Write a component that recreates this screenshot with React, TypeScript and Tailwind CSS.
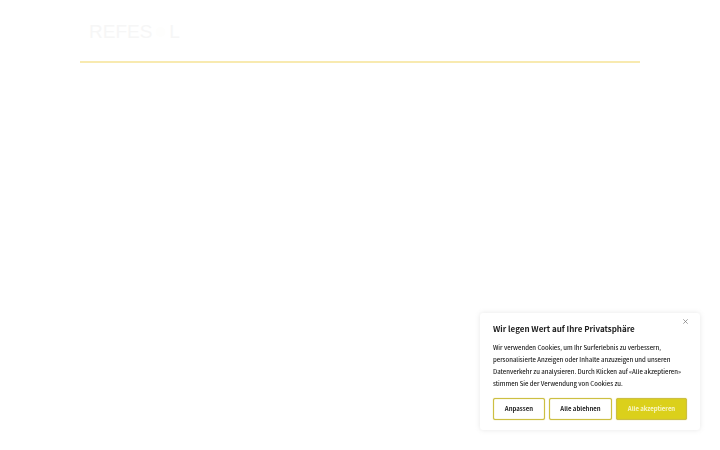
import { useState } from "react";

const buttonBase =
  "h-[22px] cursor-pointer rounded-[2px] border border-[#cdbf42] text-center whitespace-nowrap shadow-[0_0_1px_#cdbf42,inset_0_0_1px_#cdbf42]";

function Logo() {
  return (
    <a
      href="#"
      aria-label="Refesol"
      className="flex w-fit items-center font-['Liberation_Sans',sans-serif] text-[19px] leading-[22px] text-[#f6f6f6]"
    >
      <span>REFES</span>
      <svg viewBox="0 0 16 16" className="h-4 w-[17px]" aria-hidden="true">
        <circle cx="8" cy="8" r="5" fill="#fefefd" />
      </svg>
      <span>L</span>
    </a>
  );
}

function CookieBanner({ onClose }: { onClose: () => void }) {
  return (
    <section
      role="dialog"
      aria-labelledby="cookie-title"
      className="fixed right-5 bottom-5 w-[220px] rounded-[3px] bg-white px-[13px] pt-[9px] pb-[10px] shadow-[0_0_5px_#acabab4d]"
    >
      <button
        type="button"
        aria-label="Schliessen"
        onClick={onClose}
        className="absolute top-[6px] right-[12px] flex cursor-pointer"
      >
        <svg viewBox="0 0 5 5" className="h-[5px] w-[5px]" stroke="#777" strokeWidth="0.7">
          <path d="M0.3 0.3 4.7 4.7M4.7 0.3 0.3 4.7" />
        </svg>
      </button>
      <h2 id="cookie-title" className="text-[8px] leading-[14px] font-bold text-[#212121]">
        Wir legen Wert auf Ihre Privatsphäre
      </h2>
      <p className="mt-[6px] text-[6px] leading-[12px] font-medium text-[#212121]">
        Wir verwenden Cookies, um Ihr Surferlebnis zu verbessern,
        <br />
        personalisierte Anzeigen oder Inhalte anzuzeigen und unseren
        <br />
        Datenverkehr zu analysieren. Durch Klicken auf «Alle akzeptieren»
        <br />
        stimmen Sie der Verwendung von Cookies zu.
      </p>
      <div className="mt-2 grid grid-cols-[52fr_63fr_71fr] gap-1 text-[6px] leading-[12px] font-bold">
        <button type="button" onClick={onClose} className={`${buttonBase} bg-white text-[#212121]`}>
          Anpassen
        </button>
        <button type="button" onClick={onClose} className={`${buttonBase} bg-white text-[#212121]`}>
          Alle ablehnen
        </button>
        <button type="button" onClick={onClose} className={`${buttonBase} bg-[#dbd01b] text-[#f8f5c8]`}>
          Alle akzeptieren
        </button>
      </div>
    </section>
  );
}

export default function App() {
  const [open, setOpen] = useState(true);

  return (
    <div className="min-h-screen bg-white font-['Noto_Sans_CJK_SC',sans-serif]">
      <header className="mx-20 border-b-2 border-[#f8eab0] px-[9px] pt-[21px] pb-[18px]">
        <Logo />
      </header>
      {open && <CookieBanner onClose={() => setOpen(false)} />}
    </div>
  );
}
